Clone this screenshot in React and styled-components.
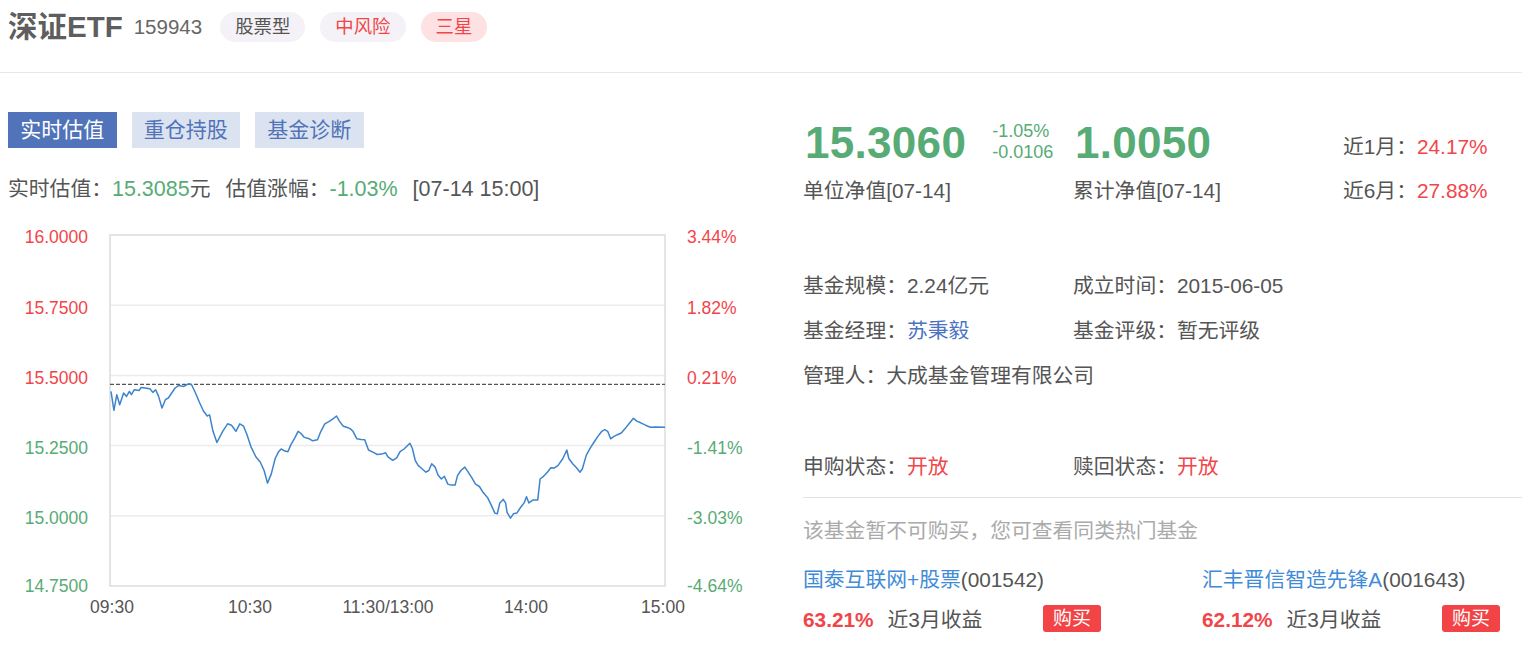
import React from "react";
import styled, { createGlobalStyle } from "styled-components";

const GREEN = "#57ab75";
const RED = "#f2454a";
const GRAY = "#555";

const Global = createGlobalStyle`
  html, body { margin: 0; padding: 0; background: #fff; }
  body {
    font-family: "Liberation Sans", "Noto Sans CJK SC", sans-serif;
    color: ${GRAY};
    font-size: 20.8px;
  }
  * { box-sizing: border-box; }
`;

const Header = styled.header`
  height: 73px;
  border-bottom: 1px solid #e8e8ea;
  padding: 12px 8px 0;
  display: flex;
  align-items: flex-start;
`;

const TitleRow = styled.div`
  height: 30px;
  display: flex;
  align-items: center;
`;

const Title = styled.h1`
  margin: 0;
  font-size: 29.5px;
  font-weight: 700;
  color: #5e5e5e;
  line-height: 30px;
`;

const Code = styled.span`
  margin-left: 11px;
  font-size: 20.5px;
  color: #666;
`;

const Tags = styled.div`
  display: flex;
  gap: 15px;
  margin-left: 18px;
`;

const Tag = styled.span`
  height: 30px;
  line-height: 30px;
  padding: 0 15px;
  border-radius: 15px;
  font-size: 18.4px;
  background: ${(p) => (p.$pink ? "#fde1e3" : "#f4f2f6")};
  color: ${(p) => (p.$red ? RED : GRAY)};
`;

const Main = styled.main`
  display: flex;
`;

const LeftCol = styled.section`
  width: 803px;
  padding: 39px 0 0 8px;
`;

const TabBar = styled.div`
  display: flex;
  gap: 15px;
`;

const Tab = styled.div`
  width: 108.5px;
  height: 36px;
  line-height: 36px;
  text-align: center;
  font-size: 21px;
  background: ${(p) => (p.$active ? "#5073b9" : "#dce3f0")};
  color: ${(p) => (p.$active ? "#fff" : "#5073b9")};
`;

const EstLine = styled.div`
  margin-top: 27px;
  height: 28px;
  line-height: 28px;
  white-space: nowrap;
`;

const Num = styled.span`
  font-size: 21.5px;
`;

const Green = styled(Num)`
  color: ${GREEN};
`;

const Red = styled.span`
  color: ${RED};
`;

const Group = styled.span`
  margin-left: 15px;
`;

const ChartSvg = styled.svg`
  display: block;
  margin-top: 17px;
  font-family: "Liberation Sans", sans-serif;
`;

const RightCol = styled.section`
  flex: 1;
  padding-top: 45px;
`;

const NavGrid = styled.div`
  display: grid;
  grid-template-columns: 270px 270px auto;
  grid-template-rows: 50px 28px;
  row-gap: 9px;
  align-items: center;
`;

const NavCell = styled.div`
  display: flex;
  align-items: center;
  padding-left: ${(p) => p.$pl || 0}px;
`;

const BigNum = styled.span`
  font-size: 44px;
  font-weight: 700;
  color: ${GREEN};
  line-height: 50px;
  letter-spacing: 0.3px;
`;

const ChangeStack = styled.div`
  margin-left: 26px;
  display: flex;
  flex-direction: column;
  font-size: 18px;
  line-height: 21px;
  color: ${GREEN};
  margin-top: -2px;
`;

const Label = styled.div`
  line-height: 28px;
  white-space: nowrap;
  margin-top: ${(p) => p.$mt || 0}px;
`;

const InfoGrid = styled.div`
  margin-top: 67px;
  display: grid;
  grid-template-columns: 270px auto;
  row-gap: 17px;
  line-height: 28px;
`;

const Wide = styled.div`
  grid-column: 1 / -1;
`;

const Link = styled.span`
  color: ${(p) => p.$c || "#4b73c4"};
`;

const StatusRow = styled.div`
  margin-top: 63px;
  display: grid;
  grid-template-columns: 270px auto;
  line-height: 28px;
`;

const Divider = styled.hr`
  margin: 16px 0 0;
  border: 0;
  border-top: 1px solid #e2e2e2;
`;

const Note = styled.div`
  margin-top: 19px;
  line-height: 28px;
  color: #aaa;
`;

const Funds = styled.div`
  margin-top: 21px;
  display: grid;
  grid-template-columns: 399px auto;
`;

const Fund = styled.div`
  display: flex;
  flex-direction: column;
  gap: 10px;
  width: 298px;
`;

const FundName = styled.div`
  line-height: 28px;
  white-space: nowrap;
`;

const ReturnRow = styled.div`
  display: flex;
  align-items: center;
  justify-content: space-between;
  height: 28px;
`;

const Pct = styled.span`
  color: ${RED};
  font-weight: 700;
  margin-right: 14px;
`;

const BuyBtn = styled.button`
  width: 58px;
  height: 27px;
  border: 0;
  border-radius: 3px;
  background: #f24446;
  color: #fff;
  font-family: inherit;
  font-size: 19px;
  padding: 0;
  line-height: 27px;
`;

/* chart data traced from the intraday curve */
const P3 = [[230,515],[236,572],[242,525],[248,555],[256,520],[262,530],[268,515],[272,525],[278,510],[288,512],[292,503],[300,505],[310,507],[316,518],[322,510],[328,530],[335,565],[342,540],[348,535],[355,520],[362,505],[370,497],[380,500],[390,492],[396,495],[404,520]];
const P4 = [[412,15],[420,40],[428,55],[433,52],[440,100],[448,133],[460,100],[470,78],[478,82],[487,100],[495,78],[503,85],[510,110],[518,145],[528,175],[537,190],[545,215],[552,252],[560,225],[568,180],[575,160],[580,152],[588,158],[594,160],[600,140],[608,120],[615,100],[620,105],[628,118],[638,122],[645,128],[655,125],[662,100],[670,78],[680,70],[688,62],[694,55],[700,70],[708,85],[715,88],[722,92],[728,100],[736,122],[745,124],[752,125],[760,155],[770,162],[778,168],[787,167],[795,163],[800,175],[810,185],[818,178],[825,160],[833,152],[845,135],[850,150],[856,185],[862,200],[870,210],[878,220],[884,215],[890,195],[897,205],[903,228],[910,240],[916,232],[923,255],[930,258],[938,258],[943,230],[950,215],[958,205],[965,220],[972,235],[980,255],[988,262],[996,280],[1005,295],[1012,315],[1020,340],[1025,342],[1030,310],[1037,300],[1042,310],[1045,338],[1052,355],[1058,342],[1065,340],[1072,325],[1080,310],[1085,292],[1090,310],[1098,302],[1108,302],[1113,240],[1120,232],[1128,220],[1135,207],[1142,208],[1150,200],[1160,180],[1168,155],[1172,180],[1180,195],[1188,207],[1195,220],[1200,210],[1208,170],[1218,145],[1225,130],[1232,115],[1240,100],[1246,95],[1252,100],[1258,122],[1265,115],[1272,110],[1280,105],[1288,92],[1296,78],[1305,62],[1312,70],[1320,75],[1330,82],[1340,88],[1350,87],[1370,88]];

const X0 = 110, X1 = 665, Y0 = 235, Y1 = 586;
const px = (zx) => X0 + ((zx - 228) / 1142) * (X1 - X0);
const py = (v) => Y0 + ((16 - v) / 1.25) * (Y1 - Y0);

const linePoints = [
  ...P3.map(([x, y]) => [px(x), py(16 - ((y - 45) / 422) * 0.5)]),
  ...P4.map(([x, y]) => [px(x), py(15.25 - ((y - 142) / 206) * 0.25)]),
];
const linePath = linePoints.map(([x, y], i) => `${i ? "L" : "M"}${x.toFixed(1)},${y.toFixed(1)}`).join(" ");

const leftLabels = ["16.0000", "15.7500", "15.5000", "15.2500", "15.0000", "14.7500"];
const rightLabels = ["3.44%", "1.82%", "0.21%", "-1.41%", "-3.03%", "-4.64%"];
const xLabels = [["09:30", 112], ["10:30", 250], ["11:30/13:00", 388], ["14:00", 526], ["15:00", 663]];

function Chart() {
  const step = (Y1 - Y0) / 5;
  const prevY = py(15.4678);
  const labelY = (i) => Y0 + i * step + (i < 5 ? 2 : 0);
  return (
    <ChartSvg width="752" height="400" viewBox="8 220 752 400">
      {[1, 2, 3, 4].map((i) => (
        <line key={i} x1={X0} x2={X1} y1={Y0 + i * step} y2={Y0 + i * step} stroke="#ececec" strokeWidth="1.5" />
      ))}
      <rect x={X0} y={Y0} width={X1 - X0} height={Y1 - Y0} fill="none" stroke="#dcdcdc" strokeWidth="1.5" />
      <line x1={X0} x2={X1} y1={prevY} y2={prevY} stroke="#555" strokeWidth="1.2" strokeDasharray="4 2" />
      <path d={linePath} fill="none" stroke="#3d84cc" strokeWidth="1.5" strokeLinejoin="round" />
      {leftLabels.map((t, i) => (
        <text key={t} x="88" y={labelY(i)} dy="0.36em" textAnchor="end" fontSize="17.5" fill={i < 3 ? RED : GREEN}>
          {t}
        </text>
      ))}
      {rightLabels.map((t, i) => (
        <text key={t} x="687" y={labelY(i)} dy="0.36em" textAnchor="start" fontSize="17.5" fill={i < 3 ? RED : GREEN}>
          {t}
        </text>
      ))}
      {xLabels.map(([t, x]) => (
        <text key={t} x={x} y="607" dy="0.36em" textAnchor="middle" fontSize="17.5" fill="#555">
          {t}
        </text>
      ))}
    </ChartSvg>
  );
}

export default function App() {
  return (
    <>
      <Global />
      <Header>
        <TitleRow>
          <Title>深证ETF</Title>
          <Code>159943</Code>
          <Tags>
            <Tag>股票型</Tag>
            <Tag $red>中风险</Tag>
            <Tag $red $pink>三星</Tag>
          </Tags>
        </TitleRow>
      </Header>
      <Main>
        <LeftCol>
          <TabBar>
            <Tab $active>实时估值</Tab>
            <Tab>重仓持股</Tab>
            <Tab>基金诊断</Tab>
          </TabBar>
          <EstLine>
            实时估值：<Green>15.3085</Green>元
            <Group>估值涨幅：<Green>-1.03%</Green></Group>
            <Group><Num>[07-14 15:00]</Num></Group>
          </EstLine>
          <Chart />
        </LeftCol>
        <RightCol>
          <NavGrid>
            <NavCell $pl={2}>
              <BigNum>15.3060</BigNum>
              <ChangeStack>
                <span>-1.05%</span>
                <span>-0.0106</span>
              </ChangeStack>
            </NavCell>
            <NavCell $pl={2}>
              <BigNum>1.0050</BigNum>
            </NavCell>
            <Label $mt={8}>
              近1月：<Red>24.17%</Red>
            </Label>
            <Label>单位净值[07-14]</Label>
            <Label>累计净值[07-14]</Label>
            <Label>
              近6月：<Red>27.88%</Red>
            </Label>
          </NavGrid>
          <InfoGrid>
            <div>基金规模：2.24亿元</div>
            <div>成立时间：2015-06-05</div>
            <div>
              基金经理：<Link>苏秉毅</Link>
            </div>
            <div>基金评级：暂无评级</div>
            <Wide>管理人：大成基金管理有限公司</Wide>
          </InfoGrid>
          <StatusRow>
            <div>
              申购状态：<Red>开放</Red>
            </div>
            <div>
              赎回状态：<Red>开放</Red>
            </div>
          </StatusRow>
          <Divider />
          <Note>该基金暂不可购买，您可查看同类热门基金</Note>
          <Funds>
            <Fund>
              <FundName>
                <Link $c="#3f8bd8">国泰互联网+股票</Link>(001542)
              </FundName>
              <ReturnRow>
                <span>
                  <Pct>63.21%</Pct>近3月收益
                </span>
                <BuyBtn>购买</BuyBtn>
              </ReturnRow>
            </Fund>
            <Fund>
              <FundName>
                <Link $c="#3f8bd8">汇丰晋信智造先锋A</Link>(001643)
              </FundName>
              <ReturnRow>
                <span>
                  <Pct>62.12%</Pct>近3月收益
                </span>
                <BuyBtn>购买</BuyBtn>
              </ReturnRow>
            </Fund>
          </Funds>
        </RightCol>
      </Main>
    </>
  );
}
